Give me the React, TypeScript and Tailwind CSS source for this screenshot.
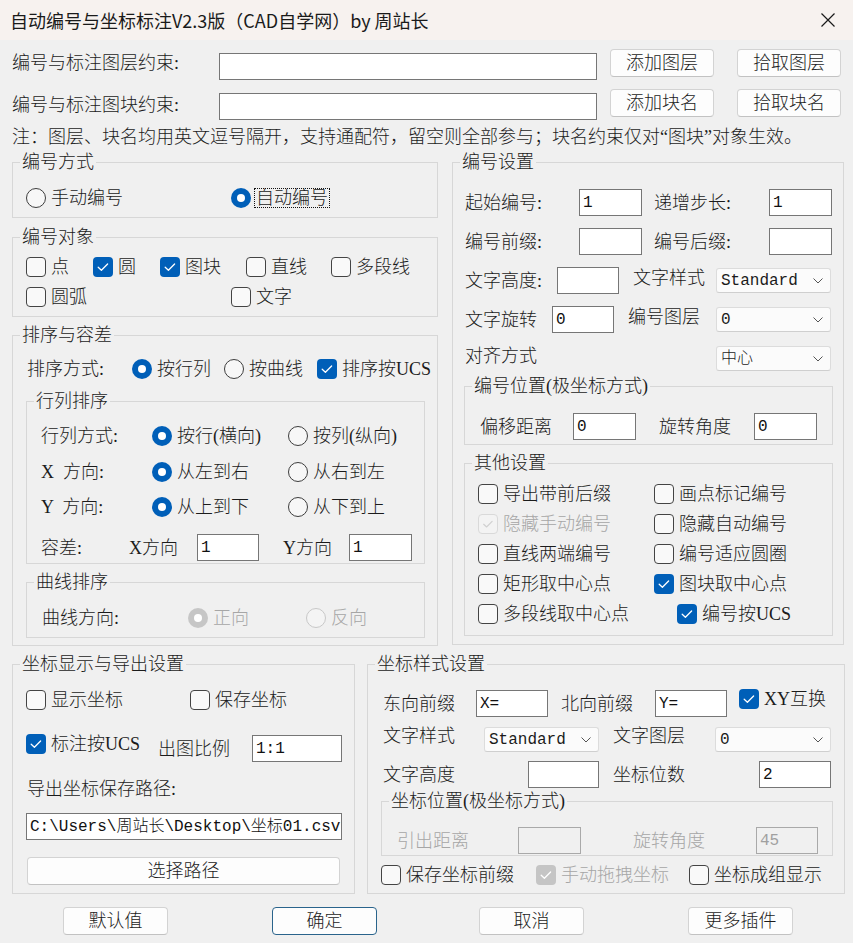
import React from "react";

type P = { cls?: string; children?: React.ReactNode };

function Radio({ checked = false, disabled = false, focus = false, label }: { checked?: boolean; disabled?: boolean; focus?: boolean; label: string }) {
  let circle = "border border-[#3d3d3d] bg-[#f7f7f7]";
  if (checked && !disabled) circle = "bg-[#005fb8]";
  if (checked && disabled) circle = "bg-[#c6c6c6]";
  if (!checked && disabled) circle = "border border-[#c8c8c8] bg-[#f4f4f4]";
  return (
    <div className="flex items-center">
      <span className={`w-[20px] h-[20px] rounded-full flex items-center justify-center shrink-0 ${circle}`}>
        {checked && <span className="w-[8px] h-[8px] rounded-full bg-white" />}
      </span>
      {focus ? (
        <span className="ml-[3px] border border-dotted border-[#111] px-[1px] leading-[18px] whitespace-nowrap">{label}</span>
      ) : (
        <span className={`ml-[5px] leading-[24px] whitespace-nowrap ${disabled ? "text-[#a6a6a6]" : ""}`}>{label}</span>
      )}
    </div>
  );
}

function Check({ checked = false, disabled = false, faint = false, label, cls = "" }: { checked?: boolean; disabled?: boolean; faint?: boolean; label: string; cls?: string }) {
  let box = "border border-[#444] bg-[#f9f9f9]";
  let stroke = "#ffffff";
  if (checked && !disabled) box = "bg-[#005fb8]";
  if (checked && disabled) box = "bg-[#c5c5c5]";
  if (faint) {
    box = "border border-[#d9d9d9] bg-[#f3f3f3]";
    stroke = "#d0d0d0";
  }
  return (
    <div className={`flex items-center ${cls}`}>
      <span className={`w-[20px] h-[20px] rounded-[4px] flex items-center justify-center shrink-0 ${box}`}>
        {(checked || faint) && (
          <svg width="20" height="20" viewBox="0 0 20 20">
            <path d="M5.2 10.3 L8.4 13.3 L14.6 7" fill="none" stroke={stroke} strokeWidth="1.3" strokeLinecap="round" strokeLinejoin="round" />
          </svg>
        )}
      </span>
      <span className={`ml-[5px] leading-[24px] whitespace-nowrap ${disabled || faint ? "text-[#a6a6a6]" : ""}`}>{label}</span>
    </div>
  );
}

function Field({ cls = "", value = "", disabled = false }: { cls?: string; value?: string; disabled?: boolean }) {
  return (
    <div
      className={`h-[27px] shrink-0 border flex items-center pl-[3px] text-[16px] whitespace-nowrap overflow-hidden font-['Liberation_Mono','Noto_Sans_CJK_SC',monospace] ${
        disabled ? "border-[#a9a9a9] bg-[#f0f0f0] text-[#a0a0a0]" : "border-[#767676] bg-white text-[#111]"
      } ${cls}`}
    >
      {value}
    </div>
  );
}

function Select({ cls = "", value }: { cls?: string; value: string }) {
  return (
    <div className={`h-[25px] shrink-0 bg-[#fbfbfb] border border-[#dcdcdc] border-b-[#cfcfcf] rounded-[3px] flex items-center justify-between pl-[4px] pr-[7px] ${cls}`}>
      <span className="text-[16px] leading-[20px] font-['Liberation_Mono','Noto_Sans_CJK_SC',monospace]">{value}</span>
      <svg width="10" height="6" viewBox="0 0 10 6">
        <path d="M0.5 0.5 L5 5 L9.5 0.5" fill="none" stroke="#555" strokeWidth="1" />
      </svg>
    </div>
  );
}

function Btn({ cls = "", children, primary = false }: P & { primary?: boolean }) {
  return (
    <div
      className={`h-[28px] shrink-0 rounded-[4px] flex items-center justify-center leading-[24px] bg-[#fdfdfd] border ${
        primary ? "border-[#2a648c]" : "border-[#d3d3d3] border-b-[#c2c2c2]"
      } ${cls}`}
    >
      {children}
    </div>
  );
}

function Group({ title, cls = "", children }: { title: string; cls?: string; children?: React.ReactNode }) {
  return (
    <div className={`border border-[#d7d7d7] flex flex-col shrink-0 ${cls}`}>
      <div className="-mt-[13px] ml-[7px] px-[2px] w-fit h-[24px] leading-[24px] bg-[#f0f0f0] whitespace-nowrap">{title}</div>
      {children}
    </div>
  );
}

export default function App() {
  return (
    <div className="w-[853px] h-[943px] bg-[#f0f0f0] text-[#1b1b1b] text-[18px] font-light font-['Liberation_Serif','Noto_Sans_CJK_SC',serif] flex flex-col overflow-hidden">
      <div className="h-[40px] shrink-0 bg-[#f7f2ef] flex items-center pl-[10px] font-normal font-['Noto_Sans_CJK_SC',sans-serif] text-[18px] text-[#1a1a1a]">
        <span>自动编号与坐标标注V2.3版（CAD自学网）by 周站长</span>
        <svg className="ml-auto mr-[18px]" width="14" height="14" viewBox="0 0 14 14">
          <path d="M0.5 0.5L13.5 13.5M13.5 0.5L0.5 13.5" stroke="#1a1a1a" strokeWidth="1.2" />
        </svg>
      </div>

      <div className="flex flex-col pl-[12px]">
        <div className="mt-[9px] h-[40px] flex items-start">
          <div className="w-[207px] mt-[2px] leading-[24px] whitespace-nowrap">编号与标注图层约束:</div>
          <Field cls="w-[378px] mt-[4px]" />
          <Btn cls="w-[104px] ml-[13px]">添加图层</Btn>
          <Btn cls="w-[104px] ml-[23px]">拾取图层</Btn>
        </div>
        <div className="h-[36px] flex items-start">
          <div className="w-[207px] mt-[4px] leading-[24px] whitespace-nowrap">编号与标注图块约束:</div>
          <Field cls="w-[378px] mt-[4px]" />
          <Btn cls="w-[104px] ml-[13px]">添加块名</Btn>
          <Btn cls="w-[104px] ml-[23px]">拾取块名</Btn>
        </div>
        <div className="h-[24px] leading-[24px] whitespace-nowrap">
          注：图层、块名均用英文逗号隔开，支持通配符，留空则全部参与；块名约束仅对“图块”对象生效。
        </div>

        <div className="mt-[13px] flex items-start">
          <div className="w-[426px] flex flex-col shrink-0">
            <Group title="编号方式" cls="h-[56px]">
              <div className="mt-[12px] pl-[13px] h-[24px] flex items-center">
                <div className="w-[205px]"><Radio label="手动编号" /></div>
                <Radio checked focus label="自动编号" />
              </div>
            </Group>
            <Group title="编号对象" cls="h-[80px] mt-[19px]">
              <div className="mt-[6px] pl-[13px] h-[24px] flex items-center">
                <div className="w-[67px]"><Check label="点" /></div>
                <div className="w-[67px]"><Check checked label="圆" /></div>
                <div className="w-[86px]"><Check checked label="图块" /></div>
                <div className="w-[85px]"><Check label="直线" /></div>
                <Check label="多段线" />
              </div>
              <div className="mt-[6px] pl-[13px] h-[24px] flex items-center">
                <div className="w-[205px]"><Check label="圆弧" /></div>
                <Check label="文字" />
              </div>
            </Group>
            <Group title="排序与容差" cls="h-[311px] mt-[18px]">
              <div className="mt-[10px] pl-[14px] h-[24px] flex items-center">
                <div className="w-[105px] leading-[24px]">排序方式:</div>
                <div className="w-[92px]"><Radio checked label="按行列" /></div>
                <div className="w-[93px]"><Radio label="按曲线" /></div>
                <Check checked label="排序按UCS" />
              </div>
              <Group title="行列排序" cls="ml-[13px] mt-[20px] w-[399px] h-[163px]">
                <div className="mt-[11px] pl-[14px] h-[24px] flex items-center">
                  <div className="w-[111px] leading-[24px]">行列方式:</div>
                  <div className="w-[136px]"><Radio checked label="按行(横向)" /></div>
                  <Radio label="按列(纵向)" />
                </div>
                <div className="mt-[12px] pl-[14px] h-[24px] flex items-center">
                  <div className="w-[111px] leading-[24px] whitespace-pre">X  方向:</div>
                  <div className="w-[136px]"><Radio checked label="从左到右" /></div>
                  <Radio label="从右到左" />
                </div>
                <div className="mt-[11px] pl-[14px] h-[24px] flex items-center">
                  <div className="w-[111px] leading-[24px] whitespace-pre">Y  方向:</div>
                  <div className="w-[136px]"><Radio checked label="从上到下" /></div>
                  <Radio label="从下到上" />
                </div>
                <div className="mt-[15px] pl-[14px] h-[27px] flex items-center">
                  <div className="w-[88px] leading-[24px]">容差:</div>
                  <div className="w-[68px] leading-[24px]">X方向</div>
                  <Field cls="w-[62px]" value="1" />
                  <div className="ml-[24px] w-[66px] leading-[24px]">Y方向</div>
                  <Field cls="w-[63px]" value="1" />
                </div>
              </Group>
              <Group title="曲线排序" cls="ml-[13px] mt-[18px] w-[399px] h-[56px]">
                <div className="mt-[12px] pl-[15px] h-[24px] flex items-center">
                  <div className="w-[146px] leading-[24px]">曲线方向:</div>
                  <div className="w-[118px]"><Radio checked disabled label="正向" /></div>
                  <Radio disabled label="反向" />
                </div>
              </Group>
            </Group>
          </div>

          <div className="ml-[14px] w-[392px] flex flex-col shrink-0">
            <Group title="编号设置" cls="h-[483px]">
              <div className="mt-[15px] pl-[12px] h-[27px] flex items-center">
                <div className="w-[114px] leading-[24px]">起始编号:</div>
                <Field cls="w-[63px]" value="1" />
                <div className="ml-[12px] w-[115px] leading-[24px]">递增步长:</div>
                <Field cls="w-[63px]" value="1" />
              </div>
              <div className="mt-[12px] pl-[12px] h-[27px] flex items-center">
                <div className="w-[114px] leading-[24px]">编号前缀:</div>
                <Field cls="w-[63px]" />
                <div className="ml-[12px] w-[115px] leading-[24px]">编号后缀:</div>
                <Field cls="w-[63px]" />
              </div>
              <div className="mt-[12px] pl-[12px] h-[27px] flex items-center">
                <div className="w-[92px] leading-[24px]">文字高度:</div>
                <Field cls="w-[62px]" />
                <div className="ml-[14px] w-[83px] leading-[24px] mb-[6px]">文字样式</div>
                <Select cls="w-[115px]" value="Standard" />
              </div>
              <div className="mt-[12px] pl-[12px] h-[27px] flex items-center">
                <div className="w-[87px] leading-[24px]">文字旋转</div>
                <Field cls="w-[62px]" value="0" />
                <div className="ml-[14px] w-[88px] leading-[24px] mb-[6px]">编号图层</div>
                <Select cls="w-[115px]" value="0" />
              </div>
              <div className="mt-[12px] pl-[12px] h-[27px] flex items-center">
                <div className="w-[251px] leading-[24px] mb-[6px]">对齐方式</div>
                <Select cls="w-[115px]" value="中心" />
              </div>
              <Group title="编号位置(极坐标方式)" cls="ml-[11px] mt-[14px] w-[369px] h-[59px]">
                <div className="mt-[15px] pl-[15px] h-[27px] flex items-center">
                  <div className="w-[93px] leading-[24px]">偏移距离</div>
                  <Field cls="w-[63px]" value="0" />
                  <div className="ml-[23px] w-[95px] leading-[24px]">旋转角度</div>
                  <Field cls="w-[63px]" value="0" />
                </div>
              </Group>
              <Group title="其他设置" cls="ml-[11px] mt-[18px] w-[369px] h-[173px]">
                <div className="mt-[4px] pl-[13px] flex flex-col">
                  <div className="h-[30px] flex items-center">
                    <div className="w-[176px]"><Check label="导出带前后缀" /></div>
                    <Check label="画点标记编号" />
                  </div>
                  <div className="h-[30px] flex items-center">
                    <div className="w-[176px]"><Check faint label="隐藏手动编号" /></div>
                    <Check label="隐藏自动编号" />
                  </div>
                  <div className="h-[30px] flex items-center">
                    <div className="w-[176px]"><Check label="直线两端编号" /></div>
                    <Check label="编号适应圆圈" />
                  </div>
                  <div className="h-[30px] flex items-center">
                    <div className="w-[176px]"><Check label="矩形取中心点" /></div>
                    <Check checked label="图块取中心点" />
                  </div>
                  <div className="h-[30px] flex items-center">
                    <div className="w-[199px]"><Check label="多段线取中心点" /></div>
                    <Check checked label="编号按UCS" />
                  </div>
                </div>
              </Group>
            </Group>
          </div>
        </div>

        <div className="mt-[18px] flex items-start">
          <Group title="坐标显示与导出设置" cls="w-[343px] h-[230px]">
            <div className="mt-[12px] pl-[13px] h-[24px] flex items-center">
              <div className="w-[164px]"><Check label="显示坐标" /></div>
              <Check label="保存坐标" />
            </div>
            <div className="mt-[23px] pl-[13px] h-[27px] flex items-center">
              <div className="w-[132px] mb-[10px]"><Check checked label="标注按UCS" /></div>
              <div className="w-[94px] leading-[24px]">出图比例</div>
              <Field cls="w-[90px]" value="1:1" />
            </div>
            <div className="mt-[15px] pl-[14px] h-[24px] leading-[24px]">导出坐标保存路径:</div>
            <div className="mt-[12px] pl-[13px] flex">
              <Field cls="w-[316px] text-[15px]" value="C:\Users\周站长\Desktop\坐标01.csv" />
            </div>
            <div className="mt-[17px] pl-[14px] flex">
              <Btn cls="w-[313px]">选择路径</Btn>
            </div>
          </Group>
          <Group title="坐标样式设置" cls="ml-[12px] w-[478px] h-[230px]">
            <div className="mt-[14px] pl-[15px] h-[27px] flex items-center">
              <div className="w-[93px] leading-[24px]">东向前缀</div>
              <Field cls="w-[72px]" value="X=" />
              <div className="ml-[13px] w-[94px] leading-[24px]">北向前缀</div>
              <Field cls="w-[72px]" value="Y=" />
              <Check checked label="XY互换" cls="ml-[12px] mb-[10px]" />
            </div>
            <div className="mt-[10px] pl-[15px] h-[25px] flex items-center">
              <div className="w-[101px] leading-[24px] mb-[8px]">文字样式</div>
              <Select cls="w-[115px]" value="Standard" />
              <div className="ml-[14px] w-[102px] leading-[24px] mb-[8px]">文字图层</div>
              <Select cls="w-[116px]" value="0" />
            </div>
            <div className="mt-[9px] pl-[15px] h-[27px] flex items-center">
              <div className="w-[145px] leading-[24px]">文字高度</div>
              <Field cls="w-[71px]" />
              <div className="ml-[14px] w-[146px] leading-[24px]">坐标位数</div>
              <Field cls="w-[72px]" value="2" />
            </div>
            <Group title="坐标位置(极坐标方式)" cls="ml-[13px] mt-[13px] w-[452px] h-[55px]">
              <div className="mt-[14px] pl-[15px] h-[27px] flex items-center">
                <div className="w-[121px] leading-[24px] text-[#a6a6a6]">引出距离</div>
                <Field disabled cls="w-[63px]" />
                <div className="ml-[52px] w-[123px] leading-[24px] text-[#a6a6a6]">旋转角度</div>
                <Field disabled cls="w-[62px]" value="45" />
              </div>
            </Group>
            <div className="mt-[7px] pl-[13px] h-[24px] flex items-center">
              <div className="w-[155px]"><Check label="保存坐标前缀" /></div>
              <div className="w-[153px]"><Check checked disabled label="手动拖拽坐标" /></div>
              <Check label="坐标成组显示" />
            </div>
          </Group>
        </div>

        <div className="mt-[13px] h-[28px] flex">
          <Btn cls="w-[105px] ml-[51px]">默认值</Btn>
          <Btn primary cls="w-[105px] ml-[104px]">确定</Btn>
          <Btn cls="w-[105px] ml-[102px]">取消</Btn>
          <Btn cls="w-[105px] ml-[104px]">更多插件</Btn>
        </div>
      </div>
    </div>
  );
}
